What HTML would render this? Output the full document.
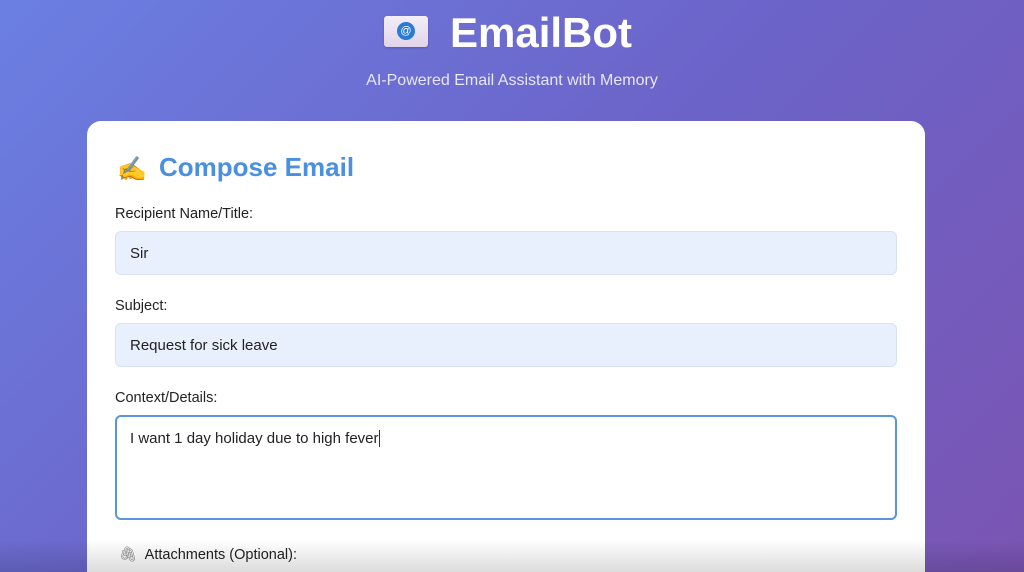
<!DOCTYPE html>
<html style="width:1024px;height:572px;overflow:hidden"><head><meta charset="utf-8"><style>
*{box-sizing:border-box;margin:0;padding:0}
body{width:1024px;height:572px;overflow:hidden;font-family:"Liberation Sans",sans-serif;background:linear-gradient(135deg,#6b7fe2 0%,#6c63c8 50%,#7a55b3 100%);position:relative}
.title{position:absolute;top:9px;left:450px;color:#fff;font-size:42px;font-weight:bold}
.env{position:absolute;left:384px;top:16px;width:44px;height:31px;background:linear-gradient(#f4eef8,#e0d4ea);border-radius:3px;box-shadow:0 1px 2px rgba(0,0,0,.2)}
.env i{position:absolute;left:13px;top:6px;width:18px;height:18px;border-radius:50%;background:#2a7ad8;color:#fff;font-size:11px;text-align:center;line-height:18px;font-style:normal}
.sub{position:absolute;top:72px;left:0;width:1024px;text-align:center;color:#e8e6f8;font-size:16px}
.card{position:absolute;left:87px;top:121px;width:838px;height:451px;background:#fff;border-radius:14px 14px 0 0}
h2{position:absolute;left:72px;top:31px;font-size:26px;color:#4a8fe0;font-weight:bold}
.hand{position:absolute;left:30px;top:34px;font-size:24px}
label{position:absolute;left:28px;font-size:14.5px;color:#222}
.in{position:absolute;left:28px;width:782px;height:44px;background:#e8effd;border:1px solid #d8e2f4;border-radius:6px;font-size:15px;color:#222;padding:13px 0 0 14px}
.ta{position:absolute;left:28px;top:294px;width:782px;height:105px;background:#fff;border:2px solid #5a95dd;border-radius:6px;font-size:15px;color:#222;padding:13px 0 0 13px}
.shade{position:absolute;left:0;top:540px;width:1024px;height:32px;background:linear-gradient(rgba(0,0,0,0),rgba(0,0,0,.14))}
</style></head><body>
<div class="env"><i>@</i></div>
<div class="title">EmailBot</div>
<div class="sub">AI-Powered Email Assistant with Memory</div>
<div class="card">
<span class="hand">✍️</span><h2>Compose Email</h2>
<label style="top:85px">Recipient Name/Title:</label>
<div class="in" style="top:110px">Sir</div>
<label style="top:177px">Subject:</label>
<div class="in" style="top:202px">Request for sick leave</div>
<label style="top:269px">Context/Details:</label>
<div class="ta">I want 1 day holiday due to high fever <span style="border-left:1px solid #333"> </span></div>
<label style="top:425px;left:32px"><span style="color:#888">🖇</span>&nbsp; Attachments (Optional):</label>
</div>
<div class="shade"></div>
</body></html>
